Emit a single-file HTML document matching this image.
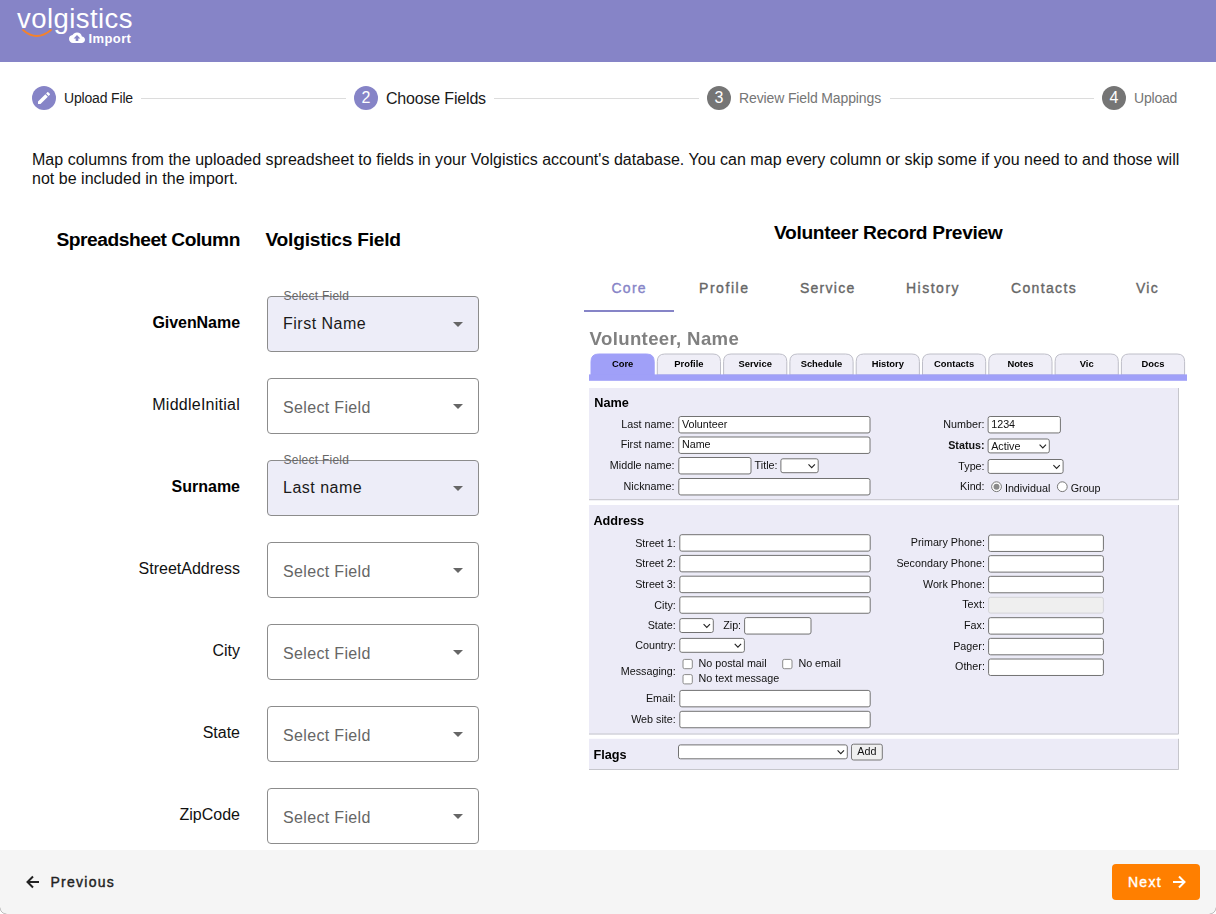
<!DOCTYPE html>
<html>
<head>
<meta charset="utf-8">
<title>Volgistics Import</title>
<style>
*{box-sizing:border-box;margin:0;padding:0}
html,body{width:1216px;height:914px;overflow:hidden;background:#fff}
body{font-family:"Liberation Sans",sans-serif;color:rgba(0,0,0,.87);position:relative}
.abs{position:absolute;white-space:nowrap}
/* header */
#hdr{position:absolute;left:0;top:0;width:1216px;height:62px;background:#8684c7}
#logo{left:17px;top:1.5px;font-size:27.5px;line-height:34px;color:#fff;letter-spacing:.44px}
#imp{left:88.5px;top:30.5px;font-size:13px;line-height:16px;font-weight:700;color:#fff;letter-spacing:.4px}
/* stepper */
.circ{position:absolute;top:86px;width:24px;height:24px;border-radius:50%;color:#fff;font-size:12px;line-height:24px;text-align:center}
.c-on{background:#8684c7}
.c-off{background:#757575}
.sl{top:86px;line-height:24px;font-size:14px}
.ln{position:absolute;top:98px;height:1px;background:#dcdcdc}
/* para */
#para{position:absolute;left:32px;top:150px;width:1170px;font-size:16px;line-height:19px;letter-spacing:.02px;color:#111;white-space:normal}
/* left */
.h2{font-weight:700;font-size:19.2px;line-height:24px;color:#000}
.lab{position:absolute;left:20px;width:220px;text-align:right;font-size:16px;line-height:20px;color:#111}
.lab.b{font-weight:700;color:#000}
.sel{position:absolute;left:267px;width:212.4px;height:56px;border:1px solid #8c8c8c;border-radius:4px;background:#fff}
.sel.on{background:#ededf8}
.sel .v{position:absolute;left:15px;top:16px;font-size:16px;line-height:22px;letter-spacing:.5px;color:#1a1a1a;white-space:nowrap}
.sel .ph{position:absolute;left:15px;top:18.5px;font-size:16px;line-height:22px;letter-spacing:.34px;color:#666;white-space:nowrap}
.sel .fl{position:absolute;left:15.5px;top:-7.5px;font-size:12px;line-height:14px;letter-spacing:.25px;color:#666;white-space:nowrap}
.sel .ar{position:absolute;left:185px;top:25.5px;width:0;height:0;border-left:5px solid transparent;border-right:5px solid transparent;border-top:5px solid #666}
/* tabs */
.tab{top:278px;font-size:14px;line-height:20px;letter-spacing:1.25px;color:#666;-webkit-text-stroke:.35px #666}
.tab.on{color:#8684c7;-webkit-text-stroke:.35px #8684c7}
/* footer */
#ftr{position:absolute;left:0;top:850px;width:1216px;height:64px;background:#f5f5f5}
.btxt{font-size:14px;line-height:20px;letter-spacing:1.25px;-webkit-text-stroke:.4px}
</style>
</head>
<body>
<div id="hdr">
  <div class="abs" id="logo">volgistics</div>
  <svg class="abs" style="left:21px;top:28px" width="32" height="10" viewBox="0 0 32 10"><path d="M2 2 Q15.5 14 30 2" fill="none" stroke="#f5822a" stroke-width="1.8" stroke-linecap="round"/></svg>
  <svg class="abs" style="left:69px;top:32px" width="16" height="11.5" viewBox="0 0 24 16"><path fill="#fff" d="M19.35 6.04A7.49 7.49 0 0 0 12 0C9.11 0 6.6 1.64 5.35 4.04A5.994 5.994 0 0 0 0 10c0 3.31 2.69 6 6 6h13c2.76 0 5-2.24 5-5 0-2.64-2.05-4.78-4.65-4.96zM14 9v4h-4V9H7l5-5 5 5h-3z"/></svg>
  <div class="abs" id="imp">Import</div>
</div>

<!-- stepper -->
<div class="circ c-on" style="left:32px"><svg width="24" height="24" viewBox="0 0 24 24" style="display:block"><path fill="#fff" transform="translate(4 4) scale(.667)" d="M3 17.25V21h3.750L17.81 9.94l-3.75-3.75L3 17.25zM20.71 7.04a.996.996 0 0 0 0-1.410l-2.34-2.34a.996.996 0 0 0-1.41 0l-1.830 1.830 3.750 3.750 1.830-1.830z"/></svg></div>
<div class="abs sl" style="left:64px;letter-spacing:-.17px;color:#1a1a1a">Upload File</div>
<div class="ln" style="left:141px;width:205px"></div>
<div class="circ c-on" style="left:354px;font-size:16px">2</div>
<div class="abs sl" style="left:386px;top:87px;font-size:16px;letter-spacing:-.18px;color:#1a1a1a">Choose Fields</div>
<div class="ln" style="left:494px;width:205px"></div>
<div class="circ c-off" style="left:707px;font-size:16px">3</div>
<div class="abs sl" style="left:739px;letter-spacing:-.13px;color:#757575">Review Field Mappings</div>
<div class="ln" style="left:889.5px;width:204.5px"></div>
<div class="circ c-off" style="left:1102px;font-size:16px">4</div>
<div class="abs sl" style="left:1134px;letter-spacing:-.2px;color:#757575">Upload</div>

<div id="para">Map columns from the uploaded spreadsheet to fields in your Volgistics account's database. You can map every column or skip some if you need to and those will not be included in the import.</div>

<!-- left column -->
<div class="abs h2" style="left:56.5px;top:227.7px;letter-spacing:-.47px">Spreadsheet Column</div>
<div class="abs h2" style="left:265.5px;top:227.7px;letter-spacing:-.25px">Volgistics Field</div>

<div class="lab b" style="top:313px;letter-spacing:-.05px">GivenName</div>
<div class="sel on" style="top:295.5px"><span class="fl">Select Field</span><span class="v">First Name</span><i class="ar"></i></div>
<div class="lab" style="top:395px;letter-spacing:.25px">MiddleInitial</div>
<div class="sel" style="top:377.5px"><span class="ph">Select Field</span><i class="ar"></i></div>
<div class="lab b" style="top:477px">Surname</div>
<div class="sel on" style="top:459.5px"><span class="fl">Select Field</span><span class="v">Last name</span><i class="ar"></i></div>
<div class="lab" style="top:559px">StreetAddress</div>
<div class="sel" style="top:541.5px"><span class="ph">Select Field</span><i class="ar"></i></div>
<div class="lab" style="top:641px">City</div>
<div class="sel" style="top:623.5px"><span class="ph">Select Field</span><i class="ar"></i></div>
<div class="lab" style="top:723px">State</div>
<div class="sel" style="top:705.5px"><span class="ph">Select Field</span><i class="ar"></i></div>
<div class="lab" style="top:805px">ZipCode</div>
<div class="sel" style="top:787.5px"><span class="ph">Select Field</span><i class="ar"></i></div>

<!-- right column -->
<div class="abs h2" style="left:774px;top:221px;letter-spacing:-.33px">Volunteer Record Preview</div>
<div class="abs tab on" style="left:611.5px">Core</div>
<div class="abs tab" style="left:699px;letter-spacing:1.55px">Profile</div>
<div class="abs tab" style="left:800px">Service</div>
<div class="abs tab" style="left:906px;letter-spacing:1.5px">History</div>
<div class="abs tab" style="left:1011px;letter-spacing:1.35px">Contacts</div>
<div class="abs tab" style="left:1136px">Vic</div>
<div style="position:absolute;left:584px;top:310px;width:90px;height:2px;background:#8684c7"></div>

<!--PREVIEW-->
<svg id="pv" width="1216" height="914" viewBox="0 0 1216 914" style="position:absolute;left:0;top:0;pointer-events:none;filter:blur(.3px)" font-family="Liberation Sans, sans-serif" font-size="10.75" fill="#111">
<text x="589.6" y="344.8" font-size="18.6" font-weight="700" fill="#808080" letter-spacing=".35">Volunteer, Name</text>
<path d="M591.00 375V361.50q0 -7.500 7.500 -7.500h48.20q7.500 0 7.500 7.500V375z" fill="#a0a0f8" stroke="#a0a0f8" stroke-width="1"/>
<text x="622.60" y="367.2" font-size="9.4" font-weight="700" fill="#000" text-anchor="middle">Core</text>
<path d="M657.30 375V361.50q0 -7.500 7.500 -7.500h48.20q7.500 0 7.500 7.500V375z" fill="#efeef7" stroke="#bebec8" stroke-width="1"/>
<text x="688.90" y="367.2" font-size="9.4" font-weight="700" fill="#000" text-anchor="middle">Profile</text>
<path d="M723.60 375V361.50q0 -7.500 7.500 -7.500h48.20q7.500 0 7.500 7.500V375z" fill="#efeef7" stroke="#bebec8" stroke-width="1"/>
<text x="755.20" y="367.2" font-size="9.4" font-weight="700" fill="#000" text-anchor="middle">Service</text>
<path d="M789.90 375V361.50q0 -7.500 7.500 -7.500h48.20q7.500 0 7.500 7.500V375z" fill="#efeef7" stroke="#bebec8" stroke-width="1"/>
<text x="821.50" y="367.2" font-size="9.4" font-weight="700" fill="#000" text-anchor="middle">Schedule</text>
<path d="M856.20 375V361.50q0 -7.500 7.500 -7.500h48.20q7.500 0 7.500 7.500V375z" fill="#efeef7" stroke="#bebec8" stroke-width="1"/>
<text x="887.80" y="367.2" font-size="9.4" font-weight="700" fill="#000" text-anchor="middle">History</text>
<path d="M922.50 375V361.50q0 -7.500 7.500 -7.500h48.20q7.500 0 7.500 7.500V375z" fill="#efeef7" stroke="#bebec8" stroke-width="1"/>
<text x="954.10" y="367.2" font-size="9.4" font-weight="700" fill="#000" text-anchor="middle">Contacts</text>
<path d="M988.80 375V361.50q0 -7.500 7.500 -7.500h48.20q7.500 0 7.500 7.500V375z" fill="#efeef7" stroke="#bebec8" stroke-width="1"/>
<text x="1020.40" y="367.2" font-size="9.4" font-weight="700" fill="#000" text-anchor="middle">Notes</text>
<path d="M1055.10 375V361.50q0 -7.500 7.500 -7.500h48.20q7.500 0 7.500 7.500V375z" fill="#efeef7" stroke="#bebec8" stroke-width="1"/>
<text x="1086.70" y="367.2" font-size="9.4" font-weight="700" fill="#000" text-anchor="middle">Vic</text>
<path d="M1121.40 375V361.50q0 -7.500 7.500 -7.500h48.20q7.500 0 7.500 7.500V375z" fill="#efeef7" stroke="#bebec8" stroke-width="1"/>
<text x="1153.00" y="367.2" font-size="9.4" font-weight="700" fill="#000" text-anchor="middle">Docs</text>
<rect x="589" y="374.4" width="598" height="6.400" fill="#a0a0f8"/>
<rect x="589" y="388" width="590" height="112.19999999999999" fill="#ecebf7"/>
<path d="M1178.500 388V499.7H589" fill="none" stroke="#c6c6cc" stroke-width="1"/>
<rect x="589" y="505" width="590" height="229.5" fill="#ecebf7"/>
<path d="M1178.500 505V734.0H589" fill="none" stroke="#c6c6cc" stroke-width="1"/>
<rect x="589" y="738.8" width="590" height="31.200000000000045" fill="#ecebf7"/>
<path d="M1178.500 738.8V769.5H589" fill="none" stroke="#c6c6cc" stroke-width="1"/>
<text x="594.3" y="407.3" font-size="12.7" font-weight="700" fill="#000">Name</text>
<text x="593.4" y="524.6" font-size="12.7" font-weight="700" fill="#000">Address</text>
<text x="593.4" y="758.5" font-size="12.7" font-weight="700" fill="#000">Flags</text>
<text x="674.4" y="427.9" text-anchor="end">Last name:</text>
<rect x="678.80" y="416.50" width="191.20" height="16.45" rx="2" fill="#fff" stroke="#727272"/>
<text x="681.9" y="427.9">Volunteer</text>
<text x="674.4" y="448.4" text-anchor="end">First name:</text>
<rect x="678.80" y="437.00" width="191.20" height="16.45" rx="2" fill="#fff" stroke="#727272"/>
<text x="681.9" y="448.4">Name</text>
<text x="674.4" y="468.9" text-anchor="end">Middle name:</text>
<rect x="678.80" y="457.50" width="72.20" height="16.45" rx="2" fill="#fff" stroke="#727272"/>
<text x="754.6" y="468.9">Title:</text>
<rect x="780.90" y="458.80" width="37.30" height="13.90" rx="2" fill="#fff" stroke="#727272"/>
<path d="M808.50 464.35L811.70 467.65L814.90 464.35" fill="none" stroke="#222" stroke-width="1.1"/>
<text x="674.4" y="489.9" text-anchor="end">Nickname:</text>
<rect x="678.80" y="478.50" width="191.20" height="16.45" rx="2" fill="#fff" stroke="#727272"/>
<text x="984.6" y="427.9" text-anchor="end">Number:</text>
<rect x="988.10" y="416.50" width="72.30" height="16.45" rx="2" fill="#fff" stroke="#727272"/>
<text x="991.2" y="427.9">1234</text>
<text x="984.6" y="449.2" text-anchor="end" font-weight="700">Status:</text>
<rect x="988.10" y="439.00" width="61.20" height="13.90" rx="2" fill="#fff" stroke="#727272"/>
<text x="991.2" y="449.8">Active</text>
<path d="M1039.60 444.55L1042.80 447.85L1046.00 444.55" fill="none" stroke="#222" stroke-width="1.1"/>
<text x="984.6" y="469.7" text-anchor="end">Type:</text>
<rect x="988.10" y="459.50" width="75.00" height="13.90" rx="2" fill="#fff" stroke="#727272"/>
<path d="M1053.40 465.05L1056.60 468.35L1059.80 465.05" fill="none" stroke="#222" stroke-width="1.1"/>
<text x="984.6" y="489.5" text-anchor="end">Kind:</text>
<circle cx="996.5" cy="486.7" r="4.900" fill="#fff" stroke="#777"/><circle cx="996.5" cy="486.7" r="3" fill="#8a8a8a"/>
<text x="1004.9" y="491.6">Individual</text>
<circle cx="1062.300" cy="486.700" r="4.900" fill="#fff" stroke="#777"/>
<text x="1070.7" y="491.6">Group</text>
<text x="675.8" y="546.6" text-anchor="end">Street 1:</text>
<rect x="679.80" y="534.70" width="190.40" height="16.45" rx="2" fill="#fff" stroke="#727272"/>
<text x="675.8" y="567.3" text-anchor="end">Street 2:</text>
<rect x="679.80" y="555.40" width="190.40" height="16.45" rx="2" fill="#fff" stroke="#727272"/>
<text x="675.8" y="588.1" text-anchor="end">Street 3:</text>
<rect x="679.80" y="576.20" width="190.40" height="16.45" rx="2" fill="#fff" stroke="#727272"/>
<text x="675.8" y="608.7" text-anchor="end">City:</text>
<rect x="679.80" y="596.80" width="190.40" height="16.45" rx="2" fill="#fff" stroke="#727272"/>
<text x="675.8" y="629.3" text-anchor="end">State:</text>
<rect x="679.80" y="618.60" width="33.50" height="13.90" rx="2" fill="#fff" stroke="#727272"/>
<path d="M703.60 624.15L706.80 627.45L710.00 624.15" fill="none" stroke="#222" stroke-width="1.1"/>
<text x="723.2" y="629.3">Zip:</text>
<rect x="744.60" y="617.60" width="66.40" height="16.45" rx="2" fill="#fff" stroke="#727272"/>
<text x="675.8" y="649.0" text-anchor="end">Country:</text>
<rect x="679.80" y="638.40" width="64.60" height="13.90" rx="2" fill="#fff" stroke="#727272"/>
<path d="M734.70 643.95L737.90 647.25L741.10 643.95" fill="none" stroke="#222" stroke-width="1.1"/>
<text x="675.8" y="675.2" text-anchor="end">Messaging:</text>
<rect x="683.00" y="659.40" width="9.30" height="9.30" rx="1.6" fill="#fff" stroke="#8a8a8a"/>
<text x="698.5" y="666.9">No postal mail</text>
<rect x="782.70" y="659.40" width="9.30" height="9.30" rx="1.6" fill="#fff" stroke="#8a8a8a"/>
<text x="798.4" y="666.9">No email</text>
<rect x="683.00" y="674.60" width="9.30" height="9.30" rx="1.6" fill="#fff" stroke="#8a8a8a"/>
<text x="698.5" y="682.1">No text message</text>
<text x="675.8" y="702.3" text-anchor="end">Email:</text>
<rect x="679.80" y="690.40" width="190.40" height="16.45" rx="2" fill="#fff" stroke="#727272"/>
<text x="675.8" y="723.2" text-anchor="end">Web site:</text>
<rect x="679.80" y="711.30" width="190.40" height="16.45" rx="2" fill="#fff" stroke="#727272"/>
<text x="984.9" y="546.3" text-anchor="end">Primary Phone:</text>
<rect x="988.60" y="535.00" width="114.80" height="16.45" rx="2" fill="#fff" stroke="#727272"/>
<text x="984.9" y="567.0" text-anchor="end">Secondary Phone:</text>
<rect x="988.60" y="555.67" width="114.80" height="16.45" rx="2" fill="#fff" stroke="#727272"/>
<text x="984.9" y="587.6" text-anchor="end">Work Phone:</text>
<rect x="988.60" y="576.34" width="114.80" height="16.45" rx="2" fill="#fff" stroke="#727272"/>
<text x="984.9" y="608.3" text-anchor="end">Text:</text>
<rect x="988.60" y="597.31" width="114.80" height="15.80" rx="2" fill="#efefef" stroke="#d4d4d8"/>
<text x="984.9" y="629.0" text-anchor="end">Fax:</text>
<rect x="988.60" y="617.68" width="114.80" height="16.45" rx="2" fill="#fff" stroke="#727272"/>
<text x="984.9" y="649.6" text-anchor="end">Pager:</text>
<rect x="988.60" y="638.35" width="114.80" height="16.45" rx="2" fill="#fff" stroke="#727272"/>
<text x="984.9" y="670.3" text-anchor="end">Other:</text>
<rect x="988.60" y="659.02" width="114.80" height="16.45" rx="2" fill="#fff" stroke="#727272"/>
<rect x="678.50" y="744.90" width="168.80" height="13.90" rx="2" fill="#fff" stroke="#727272"/>
<path d="M837.60 750.45L840.80 753.75L844.00 750.45" fill="none" stroke="#222" stroke-width="1.1"/>
<rect x="851.50" y="744.20" width="30.80" height="15.80" rx="2" fill="#efefef" stroke="#777"/>
<text x="866.900" y="755.100" text-anchor="middle">Add</text>
</svg>
<!--/PREVIEW-->

<!-- footer -->
<div id="ftr">
  <svg class="abs" style="left:26px;top:25px" width="14" height="14" viewBox="0 0 14 14"><path d="M13 7H2M7 1.500L1.500 7 7 12.500" fill="none" stroke="#222" stroke-width="2"/></svg>
  <div class="abs btxt" style="left:50.5px;top:22px;color:#222;-webkit-text-stroke-color:#222">Previous</div>
  <div style="position:absolute;left:1112px;top:14px;width:88px;height:36px;border-radius:4px;background:#ff7f00"></div>
  <div class="abs btxt" style="left:1128px;top:22px;color:#fff;-webkit-text-stroke-color:#fff">Next</div>
  <svg class="abs" style="left:1172px;top:25px" width="14" height="14" viewBox="0 0 14 14"><path d="M1 7H12M7 1.500L12.500 7 7 12.500" fill="none" stroke="#fff" stroke-width="2"/></svg>
  <svg class="abs" style="left:0;top:56px" width="8" height="8" viewBox="0 0 8 8"><path d="M0 0V8H8A8 8 0 0 1 0 0z" fill="#fff"/><path d="M0 1.500A6.500 6.500 0 0 0 6.500 8" fill="none" stroke="#bdbdbd" stroke-width="1"/></svg>
  <svg class="abs" style="left:1208px;top:56px" width="8" height="8" viewBox="0 0 8 8"><path d="M8 0V8H0A8 8 0 0 0 8 0z" fill="#fff"/><path d="M8 1.500A6.500 6.500 0 0 1 1.500 8" fill="none" stroke="#bdbdbd" stroke-width="1"/></svg>
</div>
</body>
</html>
